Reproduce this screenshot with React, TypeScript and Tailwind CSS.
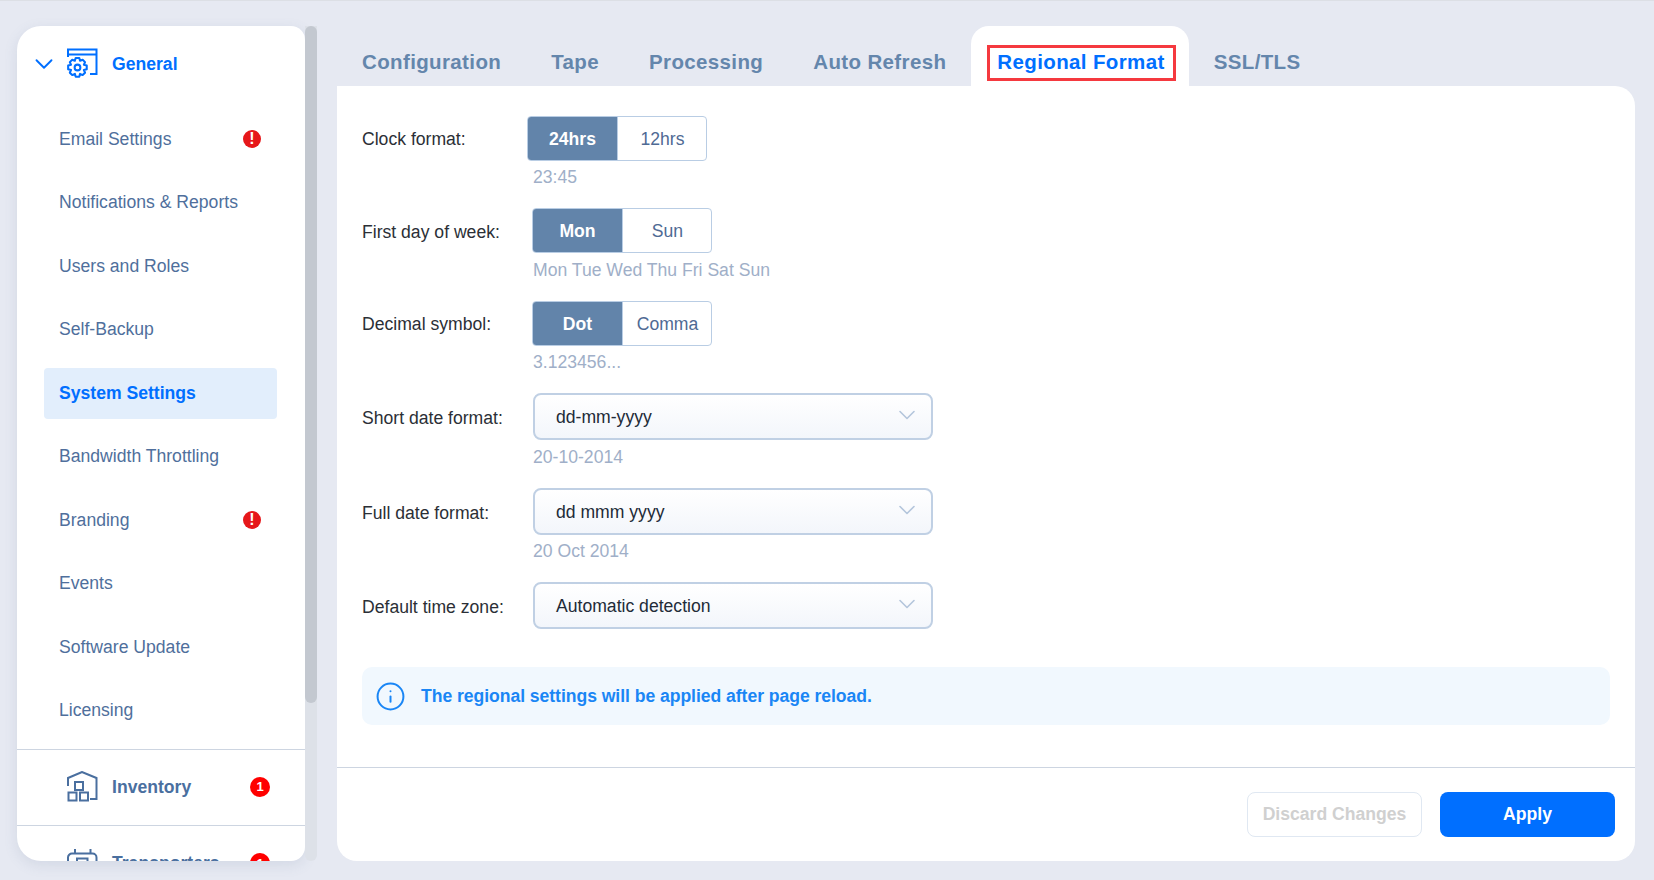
import { ChevronDown, Info } from 'lucide-react';

const menu = [
  { name: 'Email Settings', alert: true },
  { name: 'Notifications & Reports' },
  { name: 'Users and Roles' },
  { name: 'Self-Backup' },
  { name: 'System Settings', active: true },
  { name: 'Bandwidth Throttling' },
  { name: 'Branding', alert: true },
  { name: 'Events' },
  { name: 'Software Update' },
  { name: 'Licensing' },
];

const tabs = ['Configuration', 'Tape', 'Processing', 'Auto Refresh', 'Regional Format', 'SSL/TLS'];

function GeneralIcon() {
  return (
    <svg width="31" height="31" viewBox="0 0 31 31" fill="none" stroke="#006fff" strokeWidth="2">
      <path d="M1 9V1.500h28.500V26H23M1 6.500h28.500" />
      <g transform="translate(10.500 19.500) scale(1.2) translate(-12 -19.500)" strokeWidth="1.7">
        <path d="M10.500 11.500h3l.6 2.400 2.200-.9 2 2-1 2.200 2.400.7v3l-2.400.7 1 2.200-2 2-2.200-1-.6 2.400h-3l-.7-2.400-2.200 1-2-2 1-2.200-2.400-.7v-3l2.400-.7-1-2.200 2-2 2.200.9z" strokeLinejoin="round" fill="#fff" />
        <circle cx="12" cy="19.500" r="2.400" />
      </g>
    </svg>
  );
}

function InventoryIcon() {
  return (
    <svg width="31" height="31" viewBox="0 0 31 31" fill="none" stroke="#4a6f9f" strokeWidth="2">
      <path d="M1 15V7L15 1l14.500 6v21H23" />
      <rect x="8" y="11" width="8" height="8" />
      <rect x="1.500" y="21.500" width="8" height="8" />
      <rect x="13" y="21.500" width="8" height="8" />
    </svg>
  );
}

function TransportersIcon() {
  return (
    <svg width="31" height="31" viewBox="0 0 31 31" fill="none" stroke="#4a6f9f" strokeWidth="2">
      <path d="M8 5V1M23.500 5V1M1 14V9.500a4 4 0 0 1 4-4h20.500a4 4 0 0 1 4 4V14" />
      <rect x="10" y="10.500" width="10.500" height="9" />
    </svg>
  );
}

function AlertDot() {
  return (
    <span className="flex h-[18px] w-[18px] items-center justify-center rounded-full bg-[#e6171a] text-[16px] leading-none font-bold text-white">!</span>
  );
}

function CountBadge() {
  return (
    <span className="flex h-[20px] w-[20px] items-center justify-center rounded-full bg-[#ff0000] text-[13px] leading-none font-bold text-white">1</span>
  );
}

function Toggle({ on, off }: { on: string; off: string }) {
  return (
    <div className="flex h-[45px] w-[180px] rounded-[4px] border border-[#b9cde4] bg-white text-[17.6px]">
      <div className="flex w-[89px] items-center justify-center rounded-l-[3px] bg-[#6284aa] pt-[2px] font-bold text-white">{on}</div>
      <div className="flex flex-1 items-center justify-center border-l border-[#b9cde4] pt-[2px] pl-[1px] text-[#4f6a94]">{off}</div>
    </div>
  );
}

function Select({ value }: { value: string }) {
  return (
    <div className="flex h-[47px] w-[400px] items-center justify-between rounded-[8px] border-2 border-[#c0d0e4] bg-linear-to-b from-white to-[#f3f6fb] pr-[10px] pl-[21px] text-[17.6px] text-[#222b38]">
      <span className="pt-[2px]">{value}</span>
      <ChevronDown className="mb-[4px] h-[28px] w-[28px] text-[#b4c6dc]" strokeWidth={1.4} />
    </div>
  );
}

export default function App() {
  return (
    <div className="flex h-[880px] overflow-hidden border-t border-[#dcdfe5] bg-[#e6e9f2] font-['Liberation_Sans',sans-serif]">
      <aside className="mt-[25px] ml-[17px] flex h-[835px] w-[300px] shrink-0">
        <div className="h-full w-[288px] overflow-hidden rounded-l-[24px] rounded-r-[14px] bg-white shadow-[0_4px_14px_rgba(90,110,150,0.14)]">
          <div className="flex h-[87.6px] items-center pb-[12px]">
            <ChevronDown className="ml-[12px] h-[30px] w-[30px] text-[#006fff]" strokeWidth={1.5} />
            <div className="ml-[8px]"><GeneralIcon /></div>
            <span className="ml-[14px] pt-[1px] text-[17.6px] font-bold text-[#006fff]">General</span>
          </div>
          <nav className="flex flex-col gap-[12.5px] pr-[28px] pl-[27px]">
            {menu.map((item) => (
              <div
                key={item.name}
                className={`flex h-[51px] items-center justify-between rounded-[4px] pr-[16px] pl-[15px] text-[17.6px] ${
                  item.active ? 'bg-[#e2eefc] font-bold text-[#006fff]' : 'text-[#4f6f9c]'
                }`}
              >
                <span>{item.name}</span>
                {item.alert && <AlertDot />}
              </div>
            ))}
          </nav>
          <div className="mt-[13px] flex h-[77px] items-center border-y border-[#cdd5e1] pr-[35px] pb-[2px] pl-[50px]">
            <InventoryIcon />
            <span className="ml-[14px] flex-1 pt-[1px] text-[17.6px] font-bold text-[#4a6f9f]">Inventory</span>
            <CountBadge />
          </div>
          <div className="flex h-[76px] items-center pr-[35px] pb-[2px] pl-[50px]">
            <TransportersIcon />
            <span className="ml-[14px] flex-1 text-[17.6px] font-bold text-[#4a6f9f]">Transporters</span>
            <CountBadge />
          </div>
        </div>
        <div className="h-full w-[12px] rounded-b-[6px] bg-[#dde1e8]">
          <div className="h-[677px] rounded-[6px] bg-[#c3c8d0]" />
        </div>
      </aside>

      <main className="mt-[25px] ml-[20px] flex h-[835px] w-[1298px] shrink-0 flex-col">
        <div className="flex h-[60px] shrink-0">
          {tabs.map((t) =>
            t === 'Regional Format' ? (
              <div key={t} className="flex items-end rounded-t-[18px] bg-white pr-[13px] pb-[5px] pl-[16px]">
                <span className="flex h-[36px] items-center border-[3px] border-[#f5393f] pr-[8px] pb-[1px] pl-[7px] text-[20.5px] font-bold tracking-[0.37px] text-[#006fff]">{t}</span>
              </div>
            ) : (
              <div key={t} className="flex items-end px-[25px] pb-[11px] text-[20.5px] leading-[26px] font-bold tracking-[0.37px] text-[#6486ac]">{t}</div>
            ),
          )}
        </div>
        <div className="flex flex-1 flex-col rounded-b-[20px] rounded-tr-[20px] bg-white">
          <div className="flex-1 px-[25px] pt-[30px]">
            <div className="flex items-center text-[17.6px] text-[#2b2f36]">
              <span className="w-[165px] pt-[2px]">Clock format:</span>
              <Toggle on="24hrs" off="12hrs" />
            </div>
            <div className="mt-[4px] ml-[171px] text-[17.6px] leading-[24px] text-[#a0afc8]">23:45</div>

            <div className="mt-[19px] flex items-center text-[17.6px] text-[#2b2f36]">
              <span className="w-[170px] pt-[4px]">First day of week:</span>
              <Toggle on="Mon" off="Sun" />
            </div>
            <div className="mt-[5px] ml-[171px] text-[17.6px] leading-[24px] text-[#a0afc8]">Mon Tue Wed Thu Fri Sat Sun</div>

            <div className="mt-[19px] flex items-center text-[17.6px] text-[#2b2f36]">
              <span className="w-[170px] pt-[2px]">Decimal symbol:</span>
              <Toggle on="Dot" off="Comma" />
            </div>
            <div className="mt-[4px] ml-[171px] text-[17.6px] leading-[24px] text-[#a0afc8]">3.123456...</div>

            <div className="mt-[19px] flex items-center text-[17.6px] text-[#2b2f36]">
              <span className="w-[171px] pt-[4px]">Short date format:</span>
              <Select value="dd-mm-yyyy" />
            </div>
            <div className="mt-[5px] ml-[171px] text-[17.6px] leading-[24px] text-[#a0afc8]">20-10-2014</div>

            <div className="mt-[19px] flex items-center text-[17.6px] text-[#2b2f36]">
              <span className="w-[171px] pt-[4px]">Full date format:</span>
              <Select value="dd mmm yyyy" />
            </div>
            <div className="mt-[4px] ml-[171px] text-[17.6px] leading-[24px] text-[#a0afc8]">20 Oct 2014</div>

            <div className="mt-[19px] flex items-center text-[17.6px] text-[#2b2f36]">
              <span className="w-[171px] pt-[4px]">Default time zone:</span>
              <Select value="Automatic detection" />
            </div>

            <div className="mt-[38px] flex h-[58px] w-[1248px] items-center rounded-[10px] bg-[#f1f8fe] pl-[13px] text-[17.6px] font-bold tracking-[-0.05px] text-[#1a86f5]">
              <Info className="h-[31px] w-[31px]" strokeWidth={1.55} />
              <span className="ml-[15px] pt-[1px]">The regional settings will be applied after page reload.</span>
            </div>
          </div>
          <div className="flex h-[94px] shrink-0 items-start justify-end gap-[18px] border-t border-[#cdd5e1] pt-[24px] pr-[20px]">
            <button className="h-[45px] w-[175px] rounded-[8px] border border-[#e0e8f2] text-[17.6px] font-bold text-[#d0d0d0]">Discard Changes</button>
            <button className="h-[45px] w-[175px] rounded-[8px] bg-[#006fff] text-[17.6px] font-bold text-white">Apply</button>
          </div>
        </div>
      </main>
    </div>
  );
}
